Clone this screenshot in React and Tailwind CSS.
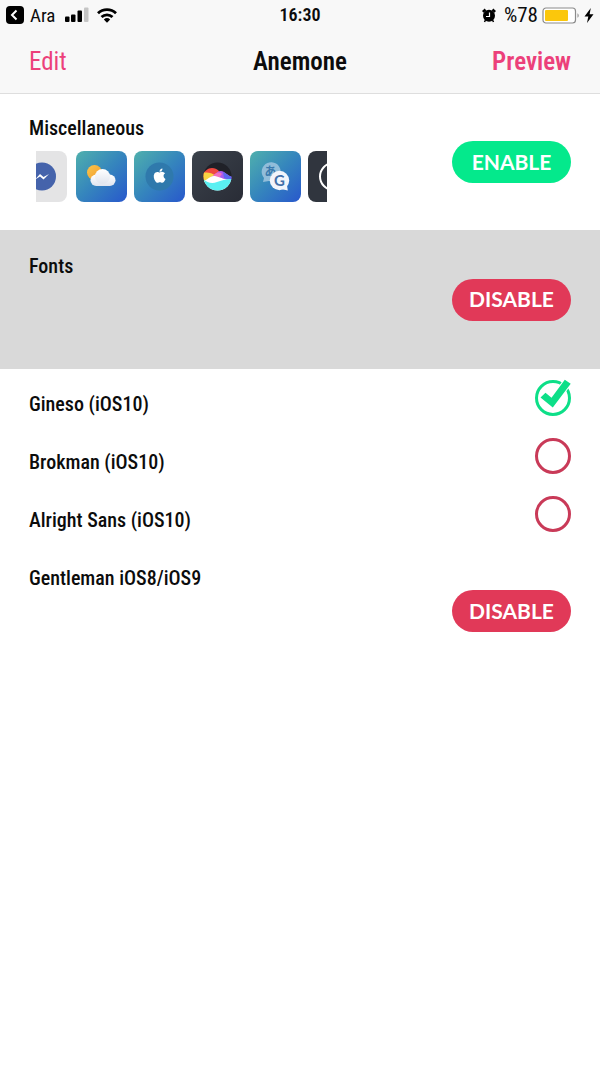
import { useState } from "react";

const tile = "size-[51px] shrink-0 rounded-lg";

function BlueGradient({ id }) {
  return (
    <linearGradient id={id} x1="0" y1="0" x2="1" y2="1">
      <stop offset="0" stopColor="#4fb0ad" />
      <stop offset="0.5" stopColor="#3585bd" />
      <stop offset="1" stopColor="#2858cc" />
    </linearGradient>
  );
}

function MessengerTile() {
  return (
    <svg viewBox="0 0 51 51" className={tile} aria-hidden="true">
      <rect width="51" height="51" fill="#e4e4e5" />
      <circle cx="26" cy="25.500" r="14" fill="#4563ab" />
      <path d="M19 28.500l5-5.500 3.500 3 5.500-3-5.500 5.500-3.500-3z" fill="#fff" />
    </svg>
  );
}

function WeatherTile() {
  return (
    <svg viewBox="0 0 51 51" className={tile} aria-hidden="true">
      <defs>
        <BlueGradient id="weather-bg" />
        <linearGradient id="sun" x1="0" y1="0" x2="1" y2="1">
          <stop offset="0" stopColor="#fac54b" />
          <stop offset="1" stopColor="#f19a2c" />
        </linearGradient>
        <linearGradient id="cloud" x1="0" y1="0" x2="0" y2="1">
          <stop offset="0" stopColor="#fff" />
          <stop offset="1" stopColor="#dfe4ee" />
        </linearGradient>
      </defs>
      <rect width="51" height="51" fill="url(#weather-bg)" />
      <circle cx="18.500" cy="21.500" r="7.500" fill="url(#sun)" />
      <g fill="url(#cloud)">
        <rect x="14.500" y="23.500" width="25" height="11.500" rx="5.700" />
        <circle cx="26.500" cy="25.500" r="7.600" />
      </g>
    </svg>
  );
}

function AppleTile() {
  return (
    <svg viewBox="0 0 51 51" className={tile} aria-hidden="true">
      <defs>
        <BlueGradient id="apple-bg" />
      </defs>
      <rect width="51" height="51" fill="url(#apple-bg)" />
      <circle cx="25.500" cy="25.500" r="14" fill="#2f79ac" />
      <g transform="translate(18.400 17.400) scale(0.600)">
        <path
          fill="#fff"
          d="M12.152 6.896c-.948 0-2.415-1.078-3.960-1.040-2.040.027-3.910 1.183-4.961 3.014-2.117 3.675-.546 9.103 1.519 12.090 1.013 1.454 2.208 3.090 3.792 3.039 1.520-.065 2.090-.987 3.935-.987 1.831 0 2.350.987 3.960.948 1.637-.026 2.676-1.480 3.676-2.948 1.156-1.688 1.636-3.325 1.662-3.415-.039-.013-3.182-1.221-3.220-4.857-.026-3.040 2.480-4.494 2.597-4.559-1.429-2.090-3.623-2.324-4.390-2.376-2-.156-3.675 1.090-4.610 1.090zM15.530 3.830c.843-1.012 1.400-2.427 1.245-3.830-1.207.052-2.662.805-3.532 1.818-.780.896-1.454 2.338-1.273 3.714 1.338.104 2.715-.688 3.559-1.701"
        />
      </g>
    </svg>
  );
}

function WavesTile() {
  return (
    <svg viewBox="0 0 51 51" className={tile} aria-hidden="true">
      <defs>
        <linearGradient id="waves-bg" x1="0" y1="0" x2="1" y2="1">
          <stop offset="0" stopColor="#3b424b" />
          <stop offset="1" stopColor="#292c36" />
        </linearGradient>
        <clipPath id="waves-clip">
          <circle cx="25.500" cy="25.500" r="14" />
        </clipPath>
      </defs>
      <rect width="51" height="51" fill="url(#waves-bg)" />
      <circle cx="25.500" cy="25.500" r="14" fill="#202128" />
      <g clipPath="url(#waves-clip)">
        <path d="M10 22c4-1 5-5 10-5 6 0 7 4 12 8v6H10z" fill="#ef4940" />
        <path d="M10 22c5-1 8-1 15 3l-5 6H10z" fill="#f8d443" />
        <path d="M19 26c4-1 5-6 10-6 4 0 6 5 12 6v4H19z" fill="#a95af0" />
        <path d="M31 21c3 1 5 4 10 5v4l-9-3z" fill="#5a68ee" />
        <path d="M21 25c2-3 6-5 9-2l-3 4z" fill="#f070c0" />
        <path d="M10 30c5 0 8-6 13-5 6 1 10 5 18 3v13H10z" fill="#fff" />
        <path d="M10 27c5 5 10 6 15 4 6-2 10-3 16-3v14H10z" fill="#5af0f2" />
      </g>
    </svg>
  );
}

function TranslateTile() {
  return (
    <svg viewBox="0 0 51 51" className={tile} aria-hidden="true">
      <defs>
        <BlueGradient id="translate-bg" />
      </defs>
      <rect width="51" height="51" fill="url(#translate-bg)" />
      <path d="M13 31l1-4a9.500 9.500 0 1 1 5 3z" fill="#91bdda" />
      <text x="14.500" y="25" fontSize="12" fontWeight="700" fill="#3979ad" fontFamily="'Noto Sans CJK JP', sans-serif">あ</text>
      <circle cx="29.500" cy="29.500" r="9.700" fill="#f1f4fb" />
      <path d="M31 38l6-3.500.8 5z" fill="#f1f4fb" />
      <text x="29.500" y="35" textAnchor="middle" fontSize="15" fontWeight="700" fill="#426fa9" fontFamily="Lato, sans-serif">G</text>
    </svg>
  );
}

function RingTile() {
  return (
    <svg viewBox="0 0 51 51" className={tile} aria-hidden="true">
      <rect width="51" height="51" fill="#30353e" />
      <circle cx="25.500" cy="25.500" r="13.500" fill="none" stroke="#fff" strokeWidth="2" />
    </svg>
  );
}

function StatusBar() {
  return (
    <div className="grid h-[30px] grid-cols-[1fr_auto_1fr] items-center px-1.5 text-[19px] leading-none">
      <div className="flex items-center">
        <svg viewBox="0 0 18 18" className="size-[18px]" aria-hidden="true">
          <rect width="18" height="18" rx="4" fill="#000" />
          <path d="M10.500 4.500L6 9l4.500 4.500" fill="none" stroke="#fff" strokeWidth="2" />
        </svg>
        <a href="#ara" className="ml-1.5">Ara</a>
        <svg viewBox="0 0 24 16" className="ml-2.5 h-4 w-6" aria-hidden="true">
          <rect y="9.500" width="4.500" height="5.500" rx="1" />
          <rect x="6" y="7.500" width="4.500" height="7.500" rx="1" />
          <rect x="12.500" y="3.500" width="4.500" height="11.500" rx="1" />
          <rect x="19" y="0.500" width="4.500" height="14.500" rx="1" fill="#c5c5c5" />
        </svg>
        <svg viewBox="0 0 20 15" className="ml-2 h-[15px] w-5" aria-hidden="true">
          <g fill="none" stroke="#000" strokeWidth="2.800">
            <path d="M1 5.200a13 13 0 0 1 18 0" />
            <path d="M4.500 9.100a8 8 0 0 1 11 0" />
          </g>
          <path d="M10 14.800l-3.200-3.300a4.700 4.700 0 0 1 6.400 0z" />
        </svg>
      </div>
      <span className="text-[18px] font-semibold">16:30</span>
      <div className="flex items-center justify-end">
        <svg viewBox="0 0 14 15" className="h-[15px] w-3.5" aria-hidden="true">
          <path d="M0.800 3.800L3.500 1.500M13.200 3.800l-2.700-2.300" stroke="#000" strokeWidth="2.400" fill="none" />
          <path d="M3.500 12l-1 2M10.500 12l1 2" stroke="#000" strokeWidth="1.500" fill="none" />
          <circle cx="7" cy="7.800" r="6" />
          <path d="M7.500 4.500V8.500H4" fill="none" stroke="#fff" strokeWidth="1.200" />
        </svg>
        <span className="ml-2 text-[21px]">%78</span>
        <svg viewBox="0 0 38 17" className="ml-1 h-[17px] w-[38px]" aria-hidden="true">
          <rect x="1" y="1" width="32.500" height="15" rx="3" fill="#fff" stroke="#8b8b8b" strokeWidth="1.200" />
          <rect x="3" y="3" width="23" height="11" rx="1" fill="#fbc70c" />
          <path d="M35.500 6.200c1.600.8 1.600 3.800 0 4.600z" fill="#8b8b8b" />
        </svg>
        <svg viewBox="0 0 10 15" className="ml-1 h-[15px] w-2.5" aria-hidden="true">
          <path d="M6.800 0L.5 8.500h3.800L3 15l6.500-8.800H5.600z" />
        </svg>
      </div>
    </div>
  );
}

function PillButton({ on, onClick, name }) {
  return (
    <button
      type="button"
      onClick={onClick}
      aria-label={`${on ? "DISABLE" : "ENABLE"} ${name}`}
      className={`h-[42px] w-[119px] shrink-0 rounded-full pb-0.5 font-[Lato,sans-serif] text-[21px] leading-none font-bold text-white ${on ? "bg-[#e13958]" : "bg-[#04e98c]"}`}
    >
      {on ? "DISABLE" : "ENABLE"}
    </button>
  );
}

function FontOption({ label, checked, onChange }) {
  return (
    <label className="flex h-[58px] items-start justify-between px-[29px] pt-1.5">
      <span className="pt-3">{label}</span>
      <span className="grid size-9 place-items-center">
        <input
          type="radio"
          name="font"
          checked={checked}
          onChange={onChange}
          className="col-start-1 row-start-1 size-9 appearance-none rounded-full border-[3px] border-[#c93a58] checked:border-[#0ddf88]"
        />
        {checked && (
          <svg viewBox="0 0 36 36" className="pointer-events-none col-start-1 row-start-1 size-9 overflow-visible" aria-hidden="true">
            <path d="M5.500 17.500l5-4.700 6 5L29.800-.3l5.900 4L17.800 27.500z" fill="#fff" stroke="#fff" strokeWidth="2" />
            <path d="M5.500 17.500l5-4.700 6 5L29.800-.3l5.900 4L17.800 27.500z" fill="#0ddf88" />
          </svg>
        )}
      </span>
    </label>
  );
}

const fonts = ["Gineso (iOS10)", "Brokman (iOS10)", "Alright Sans (iOS10)"];

export default function App() {
  const [misc, setMisc] = useState(false);
  const [fontsOn, setFontsOn] = useState(true);
  const [gentleman, setGentleman] = useState(true);
  const [font, setFont] = useState(fonts[0]);

  return (
    <div className="min-h-screen bg-white font-['Roboto_Condensed','Liberation_Sans_Narrow',Roboto,sans-serif] text-[20px] leading-6 text-[#0c0c0c]">
      <header className="border-b border-[#dedede] bg-[#f8f8f8]">
        <StatusBar />
        <nav className="grid h-[63px] grid-cols-[1fr_auto_1fr] items-center px-[29px] text-[25px]">
          <button type="button" className="justify-self-start text-[#ec407a]">Edit</button>
          <h1 className="font-semibold">Anemone</h1>
          <button type="button" className="justify-self-end font-semibold text-[#ec407a]">Preview</button>
        </nav>
      </header>
      <main>
        <section className="flex h-[136px] items-center justify-between px-[29px]">
          <div className="min-w-0 self-start pt-[22px]">
            <h2 className="font-medium">Miscellaneous</h2>
            <div className="mt-[11px] ml-[7px] flex w-[291px] gap-[7px] overflow-hidden">
              <div className="mr-0.5 -ml-5 shrink-0"><MessengerTile /></div>
              <WeatherTile />
              <AppleTile />
              <WavesTile />
              <TranslateTile />
              <RingTile />
            </div>
          </div>
          <PillButton on={misc} onClick={() => setMisc(!misc)} name="Miscellaneous" />
        </section>
        <section className="flex h-[139px] items-center justify-between bg-[#d9d9d9] px-[29px]">
          <h2 className="self-start pt-6 font-medium">Fonts</h2>
          <PillButton on={fontsOn} onClick={() => setFontsOn(!fontsOn)} name="Fonts" />
        </section>
        <div role="radiogroup" aria-label="Fonts" className="pt-[5px] font-medium">
          {fonts.map((name) => (
            <FontOption key={name} label={name} checked={font === name} onChange={() => setFont(name)} />
          ))}
        </div>
        <section className="flex items-start justify-between px-[29px] pt-[18px]">
          <h2 className="font-medium">Gentleman iOS8/iOS9</h2>
          <div className="pt-6">
            <PillButton on={gentleman} onClick={() => setGentleman(!gentleman)} name="Gentleman iOS8/iOS9" />
          </div>
        </section>
      </main>
    </div>
  );
}
